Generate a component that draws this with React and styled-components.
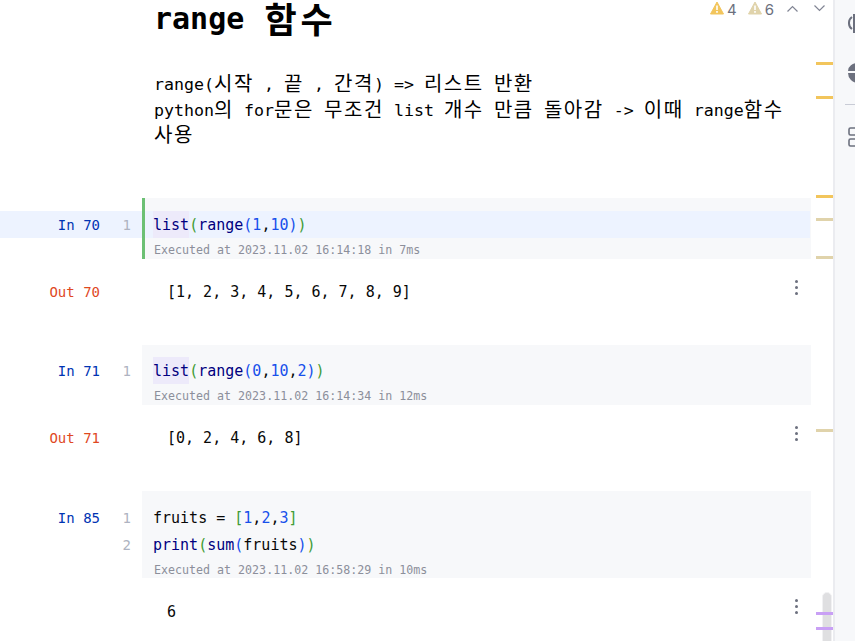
import React from 'react';
import styled, { createGlobalStyle } from 'styled-components';

const MONO = '"DejaVu Sans Mono", "Liberation Mono", "Noto Sans CJK KR", monospace';

const GlobalStyle = createGlobalStyle`
  html, body {
    margin: 0;
    height: 100%;
    overflow: hidden;
    background: #fff;
  }
`;

const Window = styled.div`
  display: flex;
  width: 855px;
  height: 641px;
  overflow: hidden;
  position: relative;
  font-family: ${MONO};
`;

const Editor = styled.main`
  width: 833px;
  height: 641px;
  flex: none;
  overflow: hidden;
  position: relative;
`;

const Rail = styled.aside`
  width: 20px;
  flex: none;
  border-left: 2px solid #ebecf0;
  background: #f7f8fa;
  overflow: hidden;
  display: flex;
  flex-direction: column;
  color: #6c707e;
`;

const RailDivider = styled.div`
  width: 16px;
  height: 1px;
  margin: 21px 0 0 10px;
  flex: none;
  background: #c9ccd6;
`;

const RailIcon = styled.svg`
  width: 20px;
  height: 20px;
  margin: ${({ $top }) => $top}px 0 0 13px;
  flex: none;
`;

const Status = styled.div`
  position: absolute;
  top: 0;
  right: 8px;
  height: 18px;
  display: flex;
  align-items: center;
  font: 15px "Inter", "Noto Sans", sans-serif;
  color: #6c707e;
`;

const Count = styled.span`
  margin: 0 ${({ $gap }) => $gap}px 0 3px;
`;

const WarnSvg = styled.svg`
  width: 14px;
  height: 14px;
  margin-top: -2px;
`;

const ChevronSvg = styled.svg`
  width: 11px;
  height: 7px;
  margin: -1px ${({ $gap }) => $gap || 0}px 0 0;
`;

const Markdown = styled.section`
  padding: 0 44px 0 154px;
  height: 198px;
  color: #000;
`;

const Title = styled.h1`
  margin: 0;
  height: 72px;
  font-size: 30px;
  font-weight: 700;
  line-height: 37px;
`;

const Prose = styled.p`
  margin: 0;
  font-size: 16.6px;
  line-height: 25.5px;
  width: 640px;
`;

const Hangul = styled.span`
  font-family: "Noto Sans CJK KR", sans-serif;
  font-size: 20px;
  line-height: 0;
  letter-spacing: 1.6px;
  vertical-align: -1px;
`;

const TitleHangul = styled(Hangul)`
  font-size: 35px;
  letter-spacing: 3.8px;
  margin-left: 2px;
  vertical-align: -4px;
`;

const Cell = styled.section`
  display: grid;
  grid-template-columns: 142px 669px;
`;

const Gutter = styled.div`
  padding-top: ${({ $top }) => $top}px;
`;

const GutterRow = styled.div`
  height: 27px;
  display: grid;
  grid-template-columns: 100px 31px;
  font-size: 14px;
  line-height: 29px;
  text-align: right;
  background: ${({ $active }) => ($active ? '#edf3ff' : 'transparent')};
`;

const Prompt = styled.span`
  color: #0033b3;
`;

const LineNumber = styled.span`
  color: #aeb3c1;
`;

const CodeBox = styled.div`
  background: #f7f8fa;
  padding-top: ${({ $top }) => $top}px;
  position: relative;
  height: ${({ $height }) => $height}px;
  box-sizing: border-box;
`;

const RunMark = styled.div`
  position: absolute;
  left: 0;
  top: 0;
  bottom: 0;
  width: 3px;
  background: #6cc074;
`;

const CodeLine = styled.div`
  height: 27px;
  padding-left: 11px;
  margin-right: ${({ $active }) => ($active ? '1px' : '0')};
  font-size: 15px;
  line-height: 29px;
  white-space: pre;
  color: #080808;
  background: ${({ $active }) => ($active ? '#edf3ff' : 'transparent')};
`;

const Call = styled.span`
  color: #000080;
`;

const MarkedCall = styled(Call)`
  display: inline-block;
  height: 27px;
  background: #edeafa;
`;

const Num = styled.span`
  color: #1750eb;
`;

const Bracket = styled.span`
  color: ${({ $c }) => $c};
`;

const Executed = styled.div`
  padding: 3px 0 0 12px;
  font-size: 11.65px;
  line-height: 18px;
  color: #8c8f9b;
  white-space: pre;
`;

const Output = styled.section`
  display: grid;
  grid-template-columns: 142px 669px;
  height: ${({ $height }) => $height}px;
  position: relative;
`;

const OutPrompt = styled.div`
  width: 100px;
  padding-top: 19px;
  font-size: 14px;
  line-height: 29px;
  text-align: right;
  color: #e0481f;
`;

const OutText = styled.div`
  padding: ${({ $top }) => $top || 19}px 0 0 25px;
  font-size: 15px;
  line-height: 29px;
  color: #080808;
  white-space: pre;
`;

const Kebab = styled.div`
  position: absolute;
  top: 21px;
  left: 795px;
  width: 3px;
  height: 15px;
  display: flex;
  flex-direction: column;
  justify-content: space-between;
`;

const Dot = styled.i`
  width: 3px;
  height: 3px;
  background: #6c707e;
  border-radius: 50%;
`;

const Mark = styled.div`
  position: absolute;
  left: 816px;
  top: ${({ $y }) => $y}px;
  width: 17px;
  height: 3px;
  background: ${({ $c }) => $c};
`;

const Thumb = styled.div`
  position: absolute;
  left: 822px;
  top: 592px;
  width: 10px;
  height: 60px;
  background: #dfdfe1;
  border: 1px solid #f1f1f3;
  border-radius: 5px;
  box-sizing: border-box;
`;

const warn = '#f2c55c';
const weak = '#e0d3ab';
const bracketA = '#3f9c35';
const bracketB = '#1750eb';

const marks = [
  [62, warn], [96, warn], [195, warn], [218, weak], [256, weak], [429, weak],
  [612, '#c9a0f5'], [627, '#c9a0f5'],
];

const WarnIcon = ({ color }) => (
  <WarnSvg viewBox="0 0 14 14">
    <path d="M7 1 L13.5 13 H0.5 Z" fill={color} stroke={color} strokeLinejoin="round" />
    <rect x="6.2" y="4.5" width="1.6" height="4.5" fill="#fff" />
    <rect x="6.2" y="10" width="1.6" height="1.8" fill="#fff" />
  </WarnSvg>
);

const Chevron = ({ up, gap }) => (
  <ChevronSvg viewBox="0 0 11 7" $gap={gap}>
    <path d={up ? 'M0.5 6.5 L5.5 1.5 L10.5 6.5' : 'M0.5 0.5 L5.5 5.5 L10.5 0.5'} fill="none" stroke="#818594" strokeWidth="1.2" />
  </ChevronSvg>
);

const Kebabs = () => (
  <Kebab>
    <Dot />
    <Dot />
    <Dot />
  </Kebab>
);

export default function App() {
  return (
    <Window>
      <GlobalStyle />
      <Editor>
        <Status>
          <WarnIcon color={warn} />
          <Count $gap={11}>4</Count>
          <WarnIcon color={weak} />
          <Count $gap={13}>6</Count>
          <Chevron up gap={16} />
          <Chevron />
        </Status>

        <Markdown>
          <Title>
            range <TitleHangul>함수</TitleHangul>
          </Title>
          <Prose>
            range(<Hangul>시작</Hangul> , <Hangul>끝</Hangul> , <Hangul>간격</Hangul>) =&gt; <Hangul>리스트</Hangul> <Hangul>반환</Hangul>
            <br />
            python<Hangul>의</Hangul> for<Hangul>문은</Hangul> <Hangul>무조건</Hangul> list <Hangul>개수</Hangul> <Hangul>만큼</Hangul> <Hangul>돌아감</Hangul> -&gt; <Hangul>이때</Hangul> range<Hangul>함수</Hangul>
            <br />
            <Hangul>사용</Hangul>
          </Prose>
        </Markdown>

        <Cell>
          <Gutter $top={13}>
            <GutterRow $active>
              <Prompt>In 70</Prompt>
              <LineNumber>1</LineNumber>
            </GutterRow>
          </Gutter>
          <CodeBox $top={13} $height={61}>
            <RunMark />
            <CodeLine $active>
              <MarkedCall>list</MarkedCall>
              <Bracket $c={bracketA}>(</Bracket>
              <Call>range</Call>
              <Bracket $c={bracketB}>(</Bracket>
              <Num>1</Num>,<Num>10</Num>
              <Bracket $c={bracketB}>)</Bracket>
              <Bracket $c={bracketA}>)</Bracket>
            </CodeLine>
            <Executed>Executed at 2023.11.02 16:14:18 in 7ms</Executed>
          </CodeBox>
        </Cell>
        <Output $height={86}>
          <OutPrompt>Out 70</OutPrompt>
          <OutText>[1, 2, 3, 4, 5, 6, 7, 8, 9]</OutText>
          <Kebabs />
        </Output>

        <Cell>
          <Gutter $top={12}>
            <GutterRow>
              <Prompt>In 71</Prompt>
              <LineNumber>1</LineNumber>
            </GutterRow>
          </Gutter>
          <CodeBox $top={12} $height={60}>
            <CodeLine>
              <MarkedCall>list</MarkedCall>
              <Bracket $c={bracketA}>(</Bracket>
              <Call>range</Call>
              <Bracket $c={bracketB}>(</Bracket>
              <Num>0</Num>,<Num>10</Num>,<Num>2</Num>
              <Bracket $c={bracketB}>)</Bracket>
              <Bracket $c={bracketA}>)</Bracket>
            </CodeLine>
            <Executed>Executed at 2023.11.02 16:14:34 in 12ms</Executed>
          </CodeBox>
        </Cell>
        <Output $height={86}>
          <OutPrompt>Out 71</OutPrompt>
          <OutText>[0, 2, 4, 6, 8]</OutText>
          <Kebabs />
        </Output>

        <Cell>
          <Gutter $top={13}>
            <GutterRow>
              <Prompt>In 85</Prompt>
              <LineNumber>1</LineNumber>
            </GutterRow>
            <GutterRow>
              <span />
              <LineNumber>2</LineNumber>
            </GutterRow>
          </Gutter>
          <CodeBox $top={13} $height={87}>
            <CodeLine>
              fruits = <Bracket $c={bracketA}>[</Bracket>
              <Num>1</Num>,<Num>2</Num>,<Num>3</Num>
              <Bracket $c={bracketA}>]</Bracket>
            </CodeLine>
            <CodeLine>
              <Call>print</Call>
              <Bracket $c={bracketA}>(</Bracket>
              <Call>sum</Call>
              <Bracket $c={bracketB}>(</Bracket>
              fruits
              <Bracket $c={bracketB}>)</Bracket>
              <Bracket $c={bracketA}>)</Bracket>
            </CodeLine>
            <Executed>Executed at 2023.11.02 16:58:29 in 10ms</Executed>
          </CodeBox>
        </Cell>
        <Output $height={63}>
          <div />
          <OutText $top={20}>6</OutText>
          <Kebabs />
        </Output>

        <Thumb />
        {marks.map(([y, c]) => (
          <Mark key={y} $y={y} $c={c} />
        ))}
      </Editor>

      <Rail>
        <RailIcon $top={14} viewBox="0 0 20 20" fill="none" stroke="currentColor" strokeWidth="2">
          <path d="M4 3 A7 7 0 0 0 1 9 A7 7 0 0 0 4 15 M6 0 V19" />
        </RailIcon>
        <RailIcon $top={29} viewBox="0 0 20 20" fill="currentColor">
          <path d="M0 8 A10 8 0 0 1 20 8 Z M0 10 H20 A10 10 0 0 1 0 10 Z" />
        </RailIcon>
        <RailDivider />
        <RailIcon $top={22} viewBox="0 0 20 20" fill="none" stroke="currentColor" strokeWidth="1.6">
          <rect x="1" y="1" width="10" height="7" rx="1.5" />
          <rect x="1" y="12" width="10" height="7" rx="1.5" />
        </RailIcon>
      </Rail>
    </Window>
  );
}
